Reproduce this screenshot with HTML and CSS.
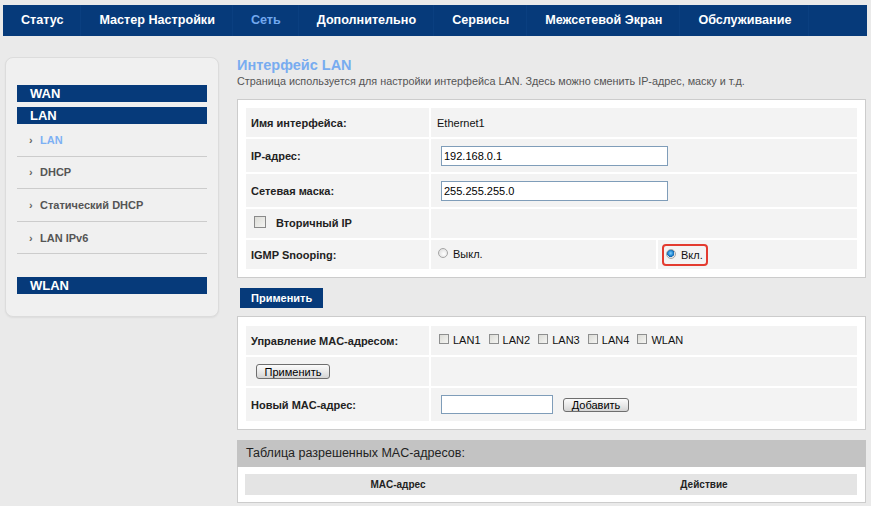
FILE: index.html
```html
<!DOCTYPE html>
<html lang="ru">
<head>
<meta charset="utf-8">
<title>Интерфейс LAN</title>
<link rel="stylesheet" href="styles.css">
</head>
<body>
<nav class="topnav">
  <a class="nav-item">Статус</a>
  <a class="nav-item">Мастер Настройки</a>
  <a class="nav-item active">Сеть</a>
  <a class="nav-item">Дополнительно</a>
  <a class="nav-item">Сервисы</a>
  <a class="nav-item">Межсетевой Экран</a>
  <a class="nav-item">Обслуживание</a>
</nav>

<div class="layout">
  <aside class="sidebar">
    <div class="side-head">WAN</div>
    <div class="side-head">LAN</div>
    <ul class="side-list">
      <li class="side-item active"><span class="arrow">›</span>LAN</li>
      <li class="side-item"><span class="arrow">›</span>DHCP</li>
      <li class="side-item"><span class="arrow">›</span>Статический DHCP</li>
      <li class="side-item"><span class="arrow">›</span>LAN IPv6</li>
    </ul>
    <div class="side-head wlan">WLAN</div>
  </aside>

  <main class="content">
    <h1 class="title">Интерфейс LAN</h1>
    <p class="desc">Страница используется для настройки интерфейса LAN. Здесь можно сменить IP-адрес, маску и т.д.</p>

    <div class="panel">
      <table class="form">
        <colgroup><col class="c1"><col class="c2"><col class="c3"></colgroup>
        <tr class="r-s">
          <td class="lbl">Имя интерфейса:</td>
          <td class="val" colspan="2">Ethernet1</td>
        </tr>
        <tr class="r-l">
          <td class="lbl">IP-адрес:</td>
          <td class="val" colspan="2"><input class="txt wide" type="text" value="192.168.0.1"></td>
        </tr>
        <tr class="r-l">
          <td class="lbl">Сетевая маска:</td>
          <td class="val" colspan="2"><input class="txt wide" type="text" value="255.255.255.0"></td>
        </tr>
        <tr class="r-s">
          <td class="lbl"><label class="chk-label"><input class="cb big" type="checkbox">Вторичный IP</label></td>
          <td class="val" colspan="2"></td>
        </tr>
        <tr class="r-s">
          <td class="lbl">IGMP Snooping:</td>
          <td class="val"><label class="radio-label"><input class="rb" type="radio" name="igmp">Выкл.</label></td>
          <td class="val"><label class="radio-label mark"><input class="rb" type="radio" name="igmp" checked>Вкл.</label></td>
        </tr>
      </table>
    </div>

    <button class="apply">Применить</button>

    <div class="panel second">
      <table class="form">
        <colgroup><col class="c1"><col></colgroup>
        <tr class="r-s">
          <td class="lbl">Управление MAC-адресом:</td>
          <td class="val ports">
            <label class="port"><input class="cb" type="checkbox">LAN1</label>
            <label class="port"><input class="cb" type="checkbox">LAN2</label>
            <label class="port"><input class="cb" type="checkbox">LAN3</label>
            <label class="port"><input class="cb" type="checkbox">LAN4</label>
            <label class="port"><input class="cb" type="checkbox">WLAN</label>
          </td>
        </tr>
        <tr class="r-s">
          <td class="lbl"><button class="btn apply-small">Применить</button></td>
          <td class="val"></td>
        </tr>
        <tr class="r-l">
          <td class="lbl">Новый MAC-адрес:</td>
          <td class="val"><input class="txt mac" type="text"><button class="btn add">Добавить</button></td>
        </tr>
      </table>
    </div>

    <div class="panel table-panel">
      <div class="table-head">Таблица разрешенных MAC-адресов:</div>
      <div class="table-body">
        <div class="th">MAC-адрес</div>
        <div class="th">Действие</div>
      </div>
    </div>
  </main>
</div>
</body>
</html>
```

FILE: styles.css
```css
* { box-sizing: border-box; }

html, body {
  margin: 0;
  padding: 0;
  background: #eaeaea;
  font-family: "Liberation Sans", Arial, sans-serif;
  color: #222;
}

/* ---------- top navigation ---------- */
.topnav {
  display: flex;
  height: 31px;
  margin: 5px 4px 0 3px;
  background: #063a7a;
}
.nav-item {
  display: block;
  padding: 0 17px 0 18px;
  line-height: 31px;
  font-size: 12.6px;
  font-weight: bold;
  color: #fff;
  border-right: 1px solid #0a3f80;
  white-space: nowrap;
}
.nav-item.active { color: #72a8ef; }

/* ---------- layout ---------- */
.layout {
  display: flex;
  align-items: flex-start;
  margin-top: 21px;
}

.sidebar {
  width: 214px;
  margin-left: 5px;
  padding: 27px 11px 22px 11px;
  background: #f0f0f0;
  border: 1px solid #dcdcdc;
  border-radius: 8px;
  box-shadow: 0 1px 2px rgba(0,0,0,0.06);
}
.side-head {
  height: 17px;
  line-height: 17px;
  padding-left: 13px;
  background: #063a7a;
  color: #fff;
  font-size: 13px;
  font-weight: bold;
}
.side-head + .side-head { margin-top: 5px; }
.side-head.wlan { margin-top: 23px; }

.side-list {
  list-style: none;
  margin: 0;
  padding: 0;
}
.side-item {
  height: 32.6px;
  padding-left: 12px;
  display: flex;
  align-items: center;
  border-bottom: 1px solid #cccccc;
  font-size: 11px;
  font-weight: bold;
  color: #555;
}
.side-item .arrow {
  width: 11px;
  font-size: 11px;
  color: #666;
}
.side-item.active { color: #7db0f4; }

/* ---------- content ---------- */
.content {
  width: 629px;
  margin-left: 18px;
}
.title {
  margin: 0;
  font-size: 14.5px;
  line-height: 17px;
  font-weight: bold;
  color: #78acf0;
}
.desc {
  margin: 0;
  font-size: 10.8px;
  line-height: 14px;
  color: #555;
}

.panel {
  margin-top: 11px;
  background: #fff;
  border: 1px solid #cccccc;
  padding: 6px;
}
.panel.second { margin-top: 8px; padding-top: 7px; }

.form {
  width: 100%;
  table-layout: fixed;
  border-collapse: separate;
  border-spacing: 2px;
}
.form col.c1 { width: 183px; }
.form col.c3 { width: 199px; }
.form td {
  background: #f3f3f3;
  padding: 0;
  vertical-align: middle;
  font-size: 11px;
}
.form tr.r-s td { height: 29px; }
.form tr.r-l td { height: 33px; }
.form td.lbl {
  padding-left: 5px;
  font-weight: bold;
  color: #222;
}
.form td.val {
  padding-left: 6px;
  color: #111;
}

.txt {
  display: block;
  margin-left: 4px;
  height: 20px;
  padding: 0 2px;
  border: 1px solid #7f9db9;
  background: #fff;
  font-family: "Liberation Sans", Arial, sans-serif;
  font-size: 11px;
  color: #000;
  outline: none;
}
.txt.wide { width: 227px; }
.txt.mac {
  display: inline-block;
  width: 112px;
  height: 19px;
  vertical-align: middle;
}

/* checkboxes / radios */
.cb {
  appearance: none;
  -webkit-appearance: none;
  margin: 0;
  width: 10px;
  height: 10px;
  border: 1px solid #8e8f8f;
  background: linear-gradient(135deg, #dcdcd7 0%, #f4f4f2 100%);
  vertical-align: middle;
  position: relative;
  top: -1px;
}
.cb.big { width: 12px; height: 12px; margin-left: 3px; margin-right: 10px; border-color: #8a8a8a; }
.chk-label { display: inline-flex; align-items: center; }

.rb {
  appearance: none;
  -webkit-appearance: none;
  margin: 0 5px 0 1px;
  width: 10px;
  height: 10px;
  border-radius: 50%;
  border: 1px solid #a5a5a5;
  background: radial-gradient(circle at 60% 60%, #ffffff 0%, #e2e2e2 70%);
  vertical-align: middle;
  position: relative;
  top: -1px;
}
.rb:checked {
  background: radial-gradient(circle at 45% 40%, #7fd0ff 0%, #2a8fd8 35%, #0e5fa8 55%, #e4e4e4 60%, #ffffff 100%);
}
.radio-label { display: inline-flex; align-items: center; font-weight: normal; }
.radio-label.mark {
  margin-left: -2px;
  padding: 3px 3px 3px 1px;
  border: 2px solid #e33b2f;
  border-radius: 4px;
}

.ports { white-space: nowrap; }
.port {
  display: inline-flex;
  align-items: center;
  gap: 4px;
  margin-left: 2px;
  margin-right: 5px;
  color: #111;
}
.port + .port { margin-left: 0; }

/* buttons */
.apply {
  display: block;
  margin-top: 10px;
  margin-left: 3px;
  height: 20px;
  padding: 0 11px;
  border: none;
  background: #063a7a;
  color: #fff;
  font-family: "Liberation Sans", Arial, sans-serif;
  font-size: 11px;
  font-weight: bold;
}
.btn {
  height: 15px;
  padding: 0 8px;
  border: 1px solid #6e6e6e;
  border-radius: 3px;
  background: linear-gradient(#fbfbfb, #e6e6e6 60%, #d4d4d4);
  font-family: "Liberation Sans", Arial, sans-serif;
  font-size: 11px;
  line-height: 12px;
  color: #000;
  font-weight: normal;
  vertical-align: middle;
}
.apply-small { margin-left: 5px; width: 74px; padding: 0; }
.add { margin-left: 10px; width: 66px; padding: 0; height: 14px; }

/* mac table */
.table-panel {
  margin-top: 10px;
  padding: 0;
}
.table-head {
  height: 27px;
  line-height: 27px;
  margin: -1px -1px 0 -1px;
  padding-left: 9px;
  background: #c3c3c3;
  font-size: 12.5px;
  color: #222;
}
.table-body {
  display: grid;
  grid-template-columns: 1fr 1fr;
  padding: 7px 8px 7px 7px;
}
.th {
  height: 21px;
  line-height: 21px;
  background: #e4e4e4;
  text-align: center;
  font-size: 10px;
  font-weight: bold;
  color: #222;
}
```
